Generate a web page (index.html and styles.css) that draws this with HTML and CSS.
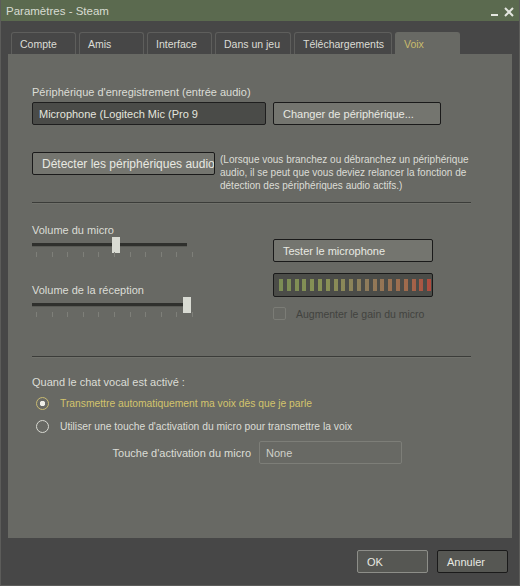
FILE: index.html
```html
<!DOCTYPE html>
<html lang="fr">

<head>
    <meta charset="UTF-8">
    <title>Paramètres - Steam</title>
    <link rel="stylesheet" href="styles.css">
</head>

<body>
    <div class="window">
        <div class="titlebar">
            <span class="title">Paramètres - Steam</span>
            <div class="controls">
                <svg width="8" height="8" viewBox="0 0 8 8"><rect x="0" y="6" width="7" height="2" fill="#e4e6e0"/></svg>
                <svg width="10" height="10" viewBox="0 0 10 10"><path d="M1 1 L9 9 M9 1 L1 9" stroke="#e4e6e0" stroke-width="2"/></svg>
            </div>
        </div>

        <div class="tabs">
            <div class="tab w65">Compte</div>
            <div class="tab w65">Amis</div>
            <div class="tab w65">Interface</div>
            <div class="tab w76">Dans un jeu</div>
            <div class="tab w98">Téléchargements</div>
            <div class="tab w65 active">Voix</div>
        </div>

        <div class="panel">
            <div class="label">Périphérique d'enregistrement (entrée audio)</div>
            <div class="row device-row">
                <div class="field">Microphone (Logitech Mic (Pro 9</div>
                <div class="btn change-btn">Changer de périphérique...</div>
            </div>
            <div class="row detect-row">
                <div class="btn detect-btn">Détecter les périphériques audio</div>
                <p class="note">(Lorsque vous branchez ou débranchez un périphérique<br>audio, il se peut que vous deviez relancer la fonction de<br>détection des périphériques audio actifs.)</p>
            </div>

            <div class="divider first"></div>

            <div class="volumes">
                <div class="col-left">
                    <div class="label">Volume du micro</div>
                    <div class="slider">
                        <div class="track"></div>
                        <div class="thumb mic"></div>
                        <div class="ticks">
                            <i></i><i></i><i></i><i></i><i></i><i></i><i></i><i></i><i></i><i></i><i></i>
                        </div>
                    </div>
                    <div class="label second">Volume de la réception</div>
                    <div class="slider">
                        <div class="track"></div>
                        <div class="thumb out"></div>
                        <div class="ticks">
                            <i></i><i></i><i></i><i></i><i></i><i></i><i></i><i></i><i></i><i></i><i></i>
                        </div>
                    </div>
                </div>
                <div class="col-right">
                    <div class="btn test-btn">Tester le microphone</div>
                    <div class="meter">
                        <div class="bars"></div>
                    </div>
                    <div class="check-row">
                        <span class="checkbox"></span>
                        <span class="disabled">Augmenter le gain du micro</span>
                    </div>
                </div>
            </div>

            <div class="divider second"></div>

            <div class="label chat">Quand le chat vocal est activé :</div>
            <div class="radio-row selected">
                <span class="radio"></span>
                <span>Transmettre automatiquement ma voix dès que je parle</span>
            </div>
            <div class="radio-row">
                <span class="radio"></span>
                <span>Utiliser une touche d'activation du micro pour transmettre la voix</span>
            </div>
            <div class="key-row">
                <span class="key-label">Touche d'activation du micro</span>
                <div class="key-field">None</div>
            </div>
        </div>

        <div class="footer">
            <div class="btn dlg-btn ok">OK</div>
            <div class="btn dlg-btn">Annuler</div>
        </div>
    </div>
</body>

</html>
```

FILE: styles.css
```css
body {
    margin: 0;
    font-family: "Liberation Sans", Arial, sans-serif;
    font-size: 11px;
    color: #dcddd6;
    background-color: #474747;
}

.window {
    width: 520px;
    height: 586px;
    box-sizing: border-box;
    border-left: 1px solid #5c5c5a;
    border-right: 1px solid #5c5c5a;
    border-bottom: 1px solid #5c5c5a;
    background-color: #474747;
}

.titlebar {
    height: 21px;
    background-color: #5b6a4f;
    display: flex;
    align-items: center;
    justify-content: space-between;
    padding: 0 5px 0 5px;
    font-size: 11.5px;
    color: #d8dcd2;
}

.controls {
    display: flex;
    align-items: center;
    gap: 5px;
    padding-top: 3px;
}

.tabs {
    display: flex;
    gap: 3px;
    margin-top: 11px;
    padding-left: 10px;
    height: 22px;
}

.tab {
    box-sizing: border-box;
    height: 22px;
    border: 1px solid #5e5e5c;
    border-bottom: none;
    border-radius: 3px 3px 0 0;
    padding: 5px 0 0 8px;
    font-size: 10.5px;
    color: #dcddd6;
}

.w65 {
    width: 65px;
}

.w76 {
    width: 76px;
}

.w98 {
    width: 98px;
}

.tab.active {
    background-color: #686964;
    border-color: #686964;
    color: #c9bb6c;
}

.panel {
    margin: 0 7px 0 7px;
    height: 484px;
    box-sizing: border-box;
    background-color: #686964;
    padding: 31px 41px 0 24px;
}

.label {
    line-height: 14px;
}

.row {
    display: flex;
    gap: 7px;
}

.device-row {
    margin-top: 3px;
}

.field {
    box-sizing: border-box;
    width: 234px;
    height: 23px;
    background-color: #4a4b48;
    border: 1px solid #1e1e1e;
    border-radius: 2px;
    padding: 5px 0 0 6px;
    color: #e4e5de;
}

.btn {
    box-sizing: border-box;
    height: 23px;
    background-color: #74756f;
    border: 1px solid #1a1a1a;
    border-radius: 2px;
    padding: 5px 0 0 9px;
    color: #e8e9e2;
    white-space: nowrap;
    overflow: hidden;
}

.change-btn {
    width: 168px;
}

.detect-row {
    margin-top: 27px;
    gap: 5px;
}

.detect-btn {
    width: 183px;
    flex: none;
    font-size: 12px;
    padding-top: 4px;
}

.note {
    margin: 1px 0 0 0;
    line-height: 13px;
    font-size: 10px;
    white-space: nowrap;
}

.divider {
    height: 1px;
    background-color: #3b3c39;
    border-bottom: 1px solid #70716b;
}

.divider.first {
    margin-top: 10px;
}

.volumes {
    display: flex;
    margin-top: 19px;
}

.col-left {
    width: 241px;
}

.label.second {
    margin-top: 18px;
}

.slider {
    position: relative;
    height: 28px;
    width: 162px;
}

.track {
    position: absolute;
    left: 0;
    top: 6px;
    width: 155px;
    height: 3px;
    background-color: #2f302d;
    border-bottom: 1px solid #595a55;
}

.thumb {
    position: absolute;
    top: 0;
    width: 8px;
    height: 16px;
    background-color: #d9dbd3;
}

.thumb.mic {
    left: 80px;
}

.thumb.out {
    left: 151px;
}

.ticks {
    position: absolute;
    top: 15px;
    left: 4px;
    width: 157px;
    display: flex;
    justify-content: space-between;
}

.ticks i {
    width: 1px;
    height: 5px;
    background-color: #7e7f79;
}

.col-right {
    padding-top: 16px;
}

.test-btn {
    width: 160px;
}

.meter {
    box-sizing: border-box;
    width: 160px;
    height: 24px;
    margin-top: 11px;
    background-color: #4b4c48;
    border: 1px solid #1a1a1a;
    border-radius: 2px;
    padding: 5px 0 0 5px;
}

.bars {
    height: 12px;
    width: 152px;
    background:
        repeating-linear-gradient(to right, transparent 0 4px, #4b4c48 4px 7.8px),
        linear-gradient(to right, #7b8c55 0%, #889155 30%, #8d7d5c 55%, #a06a4c 85%, #b04a3e 100%);
}

.check-row {
    display: flex;
    align-items: center;
    gap: 10px;
    margin-top: 10px;
    font-size: 10.5px;
}

.checkbox {
    box-sizing: border-box;
    width: 13px;
    height: 13px;
    border: 1px solid #7b7c76;
    border-radius: 2px;
}

.disabled {
    color: #42433f;
}

.divider.second {
    margin-top: 31px;
}

.label.chat {
    margin-top: 17px;
}

.radio-row {
    display: flex;
    align-items: center;
    gap: 11px;
    margin-left: 4px;
    height: 23px;
    font-size: 10.3px;
}

.label.chat + .radio-row {
    margin-top: 3px;
}

.radio {
    box-sizing: border-box;
    width: 13px;
    height: 13px;
    border: 1.5px solid #d8d9d2;
    border-radius: 50%;
}

.radio-row.selected {
    color: #d3c46c;
}

.radio-row.selected .radio {
    border-color: #c9bb72;
    background: radial-gradient(circle, #eeeee6 0 2.5px, transparent 3px);
}

.key-row {
    display: flex;
    align-items: center;
    gap: 8px;
    margin-top: 3px;
}

.key-label {
    width: 219px;
    text-align: right;
}

.key-field {
    box-sizing: border-box;
    width: 143px;
    height: 23px;
    border: 1px solid #7d7e78;
    border-radius: 2px;
    padding: 5px 0 0 6px;
    color: #cfd0c9;
}

.footer {
    display: flex;
    justify-content: flex-end;
    gap: 9px;
    padding: 12px 11px 0 0;
}

.dlg-btn {
    width: 71px;
    background-color: #565753;
}

.dlg-btn.ok {
    border-color: #8d8e89;
}
```
